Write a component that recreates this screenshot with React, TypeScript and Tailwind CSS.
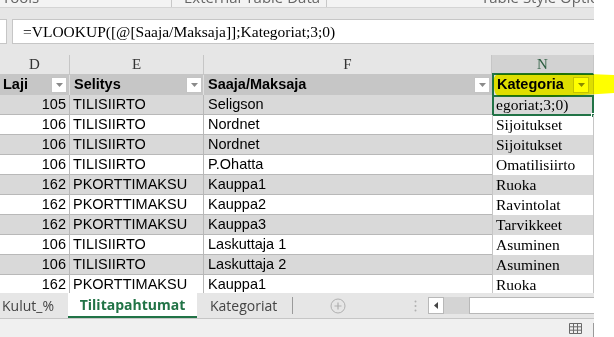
import React from "react";

type Row = { laji: string; selitys: string; saaja: string; kat: string };

const rows: Row[] = [
  { laji: "105", selitys: "TILISIIRTO", saaja: "Seligson", kat: "egoriat;3;0)" },
  { laji: "106", selitys: "TILISIIRTO", saaja: "Nordnet", kat: "Sijoitukset" },
  { laji: "106", selitys: "TILISIIRTO", saaja: "Nordnet", kat: "Sijoitukset" },
  { laji: "106", selitys: "TILISIIRTO", saaja: "P.Ohatta", kat: "Omatilisiirto" },
  { laji: "162", selitys: "PKORTTIMAKSU", saaja: "Kauppa1", kat: "Ruoka" },
  { laji: "162", selitys: "PKORTTIMAKSU", saaja: "Kauppa2", kat: "Ravintolat" },
  { laji: "162", selitys: "PKORTTIMAKSU", saaja: "Kauppa3", kat: "Tarvikkeet" },
  { laji: "106", selitys: "TILISIIRTO", saaja: "Laskuttaja 1", kat: "Asuminen" },
  { laji: "106", selitys: "TILISIIRTO", saaja: "Laskuttaja 2", kat: "Asuminen" },
  { laji: "162", selitys: "PKORTTIMAKSU", saaja: "Kauppa1", kat: "Ruoka" },
];

const Drop = () => (
  <div className="w-[16px] h-[16px] shrink-0 bg-white border border-[#c4c4c4] flex items-center justify-center">
    <svg width="7" height="4" viewBox="0 0 7 4">
      <path d="M0 0H7L3.5 4Z" fill="#8a8a8a" />
    </svg>
  </div>
);

const App = () => {
  return (
    <div className="relative w-[614px] h-[337px] overflow-hidden bg-white font-['Liberation_Sans',Arial,sans-serif] text-black">
      <div className="w-[594px] flex flex-col">
        {/* ribbon bottom */}
        <div className="h-[8px] bg-[#f3f3f3] border-b border-[#d4d4d4] flex overflow-hidden font-['Open_Sans',sans-serif] text-[15px] text-[#666]">
          <div className="w-[172px] border-r border-[#c8c8c8] pl-[2px]">
            <div className="leading-[18px] -mt-[12px]">Tools</div>
          </div>
          <div className="w-[155px] border-r border-[#c8c8c8] pl-[12px]">
            <div className="leading-[18px] -mt-[12px] whitespace-nowrap">External Table Data</div>
          </div>
          <div className="flex-1 pl-[154px] overflow-hidden">
            <div className="leading-[18px] -mt-[12px] whitespace-nowrap">Table Style Options</div>
          </div>
        </div>

        <div className="h-[11px] bg-[#e6e6e6]" />

        {/* formula bar */}
        <div className="h-[25px] flex bg-[#e6e6e6]">
          <div className="w-[7px] bg-white border-y border-r border-[#c6c6c6]" />
          <div className="w-[5px]" />
          <div className="flex-1 bg-white border-y border-l border-[#c6c6c6] pl-[10px] flex items-center font-['Liberation_Serif',serif] text-[15.5px] whitespace-nowrap">
            =VLOOKUP([@[Saaja/Maksaja]];Kategoriat;3;0)
          </div>
        </div>

        <div className="h-[11px] bg-[#e6e6e6]" />

        {/* column letters */}
        <div className="h-[20px] flex bg-[#e6e6e6] font-['Liberation_Serif',serif] text-[15px] text-[#333]">
          <div className="w-[70px] border-r border-b border-[#c6c6c6] flex items-center justify-center">D</div>
          <div className="w-[134px] border-r border-b border-[#c6c6c6] flex items-center justify-center">E</div>
          <div className="w-[288px] border-r border-b border-[#c6c6c6] flex items-center justify-center">F</div>
          <div className="w-[102px] bg-[#d2d2d2] border-r border-[#c6c6c6] border-b-2 border-b-[#217346] flex items-center justify-center text-[#2d5e41]">N</div>
        </div>

        {/* table header */}
        <div className="h-[20px] flex bg-[#c6c6c6] font-bold text-[14.5px]">
          <div className="w-[70px] border-r border-[#e0e0e0] flex items-center pl-[3px] pr-[2px] justify-between">
            <span>Laji</span>
            <Drop />
          </div>
          <div className="w-[134px] border-r border-[#e0e0e0] flex items-center pl-[4px] pr-[1px] justify-between">
            <span>Selitys</span>
            <Drop />
          </div>
          <div className="w-[288px] flex items-center pl-[4px] pr-[2px] justify-between">
            <span>Saaja/Maksaja</span>
            <Drop />
          </div>
          <div className="w-[102px] bg-[#dedede] border-l-2 border-r border-l-[#217346] border-r-[#c6c6c6] flex items-center pl-[3px] pr-[4px] justify-between">
            <span>Kategoria</span>
            <Drop />
          </div>
        </div>

        {/* data rows */}
        <div className="h-[198px] overflow-hidden">
          {rows.map((r, i) => (
            <div key={i} className={`h-[20px] flex text-[14.5px] ${i % 2 === 0 ? "bg-[#d9d9d9]" : "bg-white"}`}>
              <div className="w-[70px] border-r border-b border-[#b8b8b8] flex items-center justify-end pr-[3px]">{r.laji}</div>
              <div className="w-[134px] border-r border-b border-[#b8b8b8] flex items-center pl-[3px] whitespace-nowrap">{r.selitys}</div>
              <div className="w-[288px] border-b border-[#b8b8b8] flex items-center pl-[4px] whitespace-nowrap">{r.saaja}</div>
              <div className="relative w-[102px] border-x border-[#c6c6c6] flex items-center pl-[3px] font-['Liberation_Serif',serif] text-[15.5px] whitespace-nowrap">
                {r.kat}
                {i === 0 && (
                  <>
                    <div className="absolute -left-[1px] -right-[1px] top-0 -bottom-[1px] border-2 border-[#217346]" />
                    <div className="absolute -right-[3px] -bottom-[3px] w-[5px] h-[5px] bg-[#217346] border border-white" />
                  </>
                )}
              </div>
            </div>
          ))}
        </div>

        {/* sheet tabs */}
        <div className="h-[26px] flex bg-[#e6e6e6] border-b border-[#c6c6c6] font-['Open_Sans',sans-serif] text-[14px] text-[#444]">
          <div className="w-[68px] flex items-center pl-[2px]">Kulut_%</div>
          <div className="w-[129px] bg-white border-b-2 border-[#217346] flex items-center justify-center font-bold text-[#217346]">
            Tilitapahtumat
          </div>
          <div className="w-[96px] flex items-center pl-[13px] border-r border-[#9a9a9a] my-[4px]">Kategoriat</div>
          <div className="w-[37px]" />
          <div className="w-[16px] flex items-center justify-center">
            <svg width="16" height="16" viewBox="0 0 16 16">
              <circle cx="8" cy="8" r="7" fill="none" stroke="#b0b0b0" strokeWidth="1" />
              <path d="M8 4.5V11.5M4.5 8H11.5" stroke="#b0b0b0" strokeWidth="1.2" />
            </svg>
          </div>
          <div className="w-[60px]" />
          <div className="w-[18px] flex items-center justify-center">
            <svg width="3" height="12" viewBox="0 0 3 12">
              <circle cx="1.5" cy="1.5" r="1" fill="#b0b0b0" />
              <circle cx="1.5" cy="6" r="1" fill="#b0b0b0" />
              <circle cx="1.5" cy="10.5" r="1" fill="#b0b0b0" />
            </svg>
          </div>
          <div className="w-[4px]" />
          <div className="w-[16px] my-[4px] bg-white border border-[#b8b8b8] flex items-center justify-center">
            <svg width="4" height="7" viewBox="0 0 4 7">
              <path d="M4 0V7L0 3.5Z" fill="#444" />
            </svg>
          </div>
          <div className="w-[25px] my-[4px] bg-[#d4d4d4]" />
          <div className="flex-1 my-[4px] bg-white border-y border-l border-[#b8b8b8]" />
        </div>

        {/* status bar */}
        <div className="h-[18px] flex bg-[#f0f0f0] items-center justify-end">
          <svg width="13" height="11" viewBox="0 0 13 11" className="mr-[5px]">
            <path d="M0.5 0.5H12.5V10.5H0.5Z M0.5 3.8H12.5 M0.5 7.2H12.5 M4.5 0.5V10.5 M8.5 0.5V10.5" fill="none" stroke="#6a6a6a" strokeWidth="1" />
          </svg>
          <div className="w-[6px]" />
          <div className="w-[1px] h-[14px] self-end bg-[#9a9a9a]" />
        </div>
      </div>

      {/* highlighter stroke */}
      <svg className="absolute left-[492px] top-[72px] mix-blend-multiply pointer-events-none" width="122" height="26" viewBox="0 0 122 26">
        <path d="M6 2 C2 3 1 8 2 13 C2 19 3 23 7 24 L60 25 L122 21 L122 3 L70 1 Z" fill="#ffff00" />
      </svg>
    </div>
  );
};

export default App;
